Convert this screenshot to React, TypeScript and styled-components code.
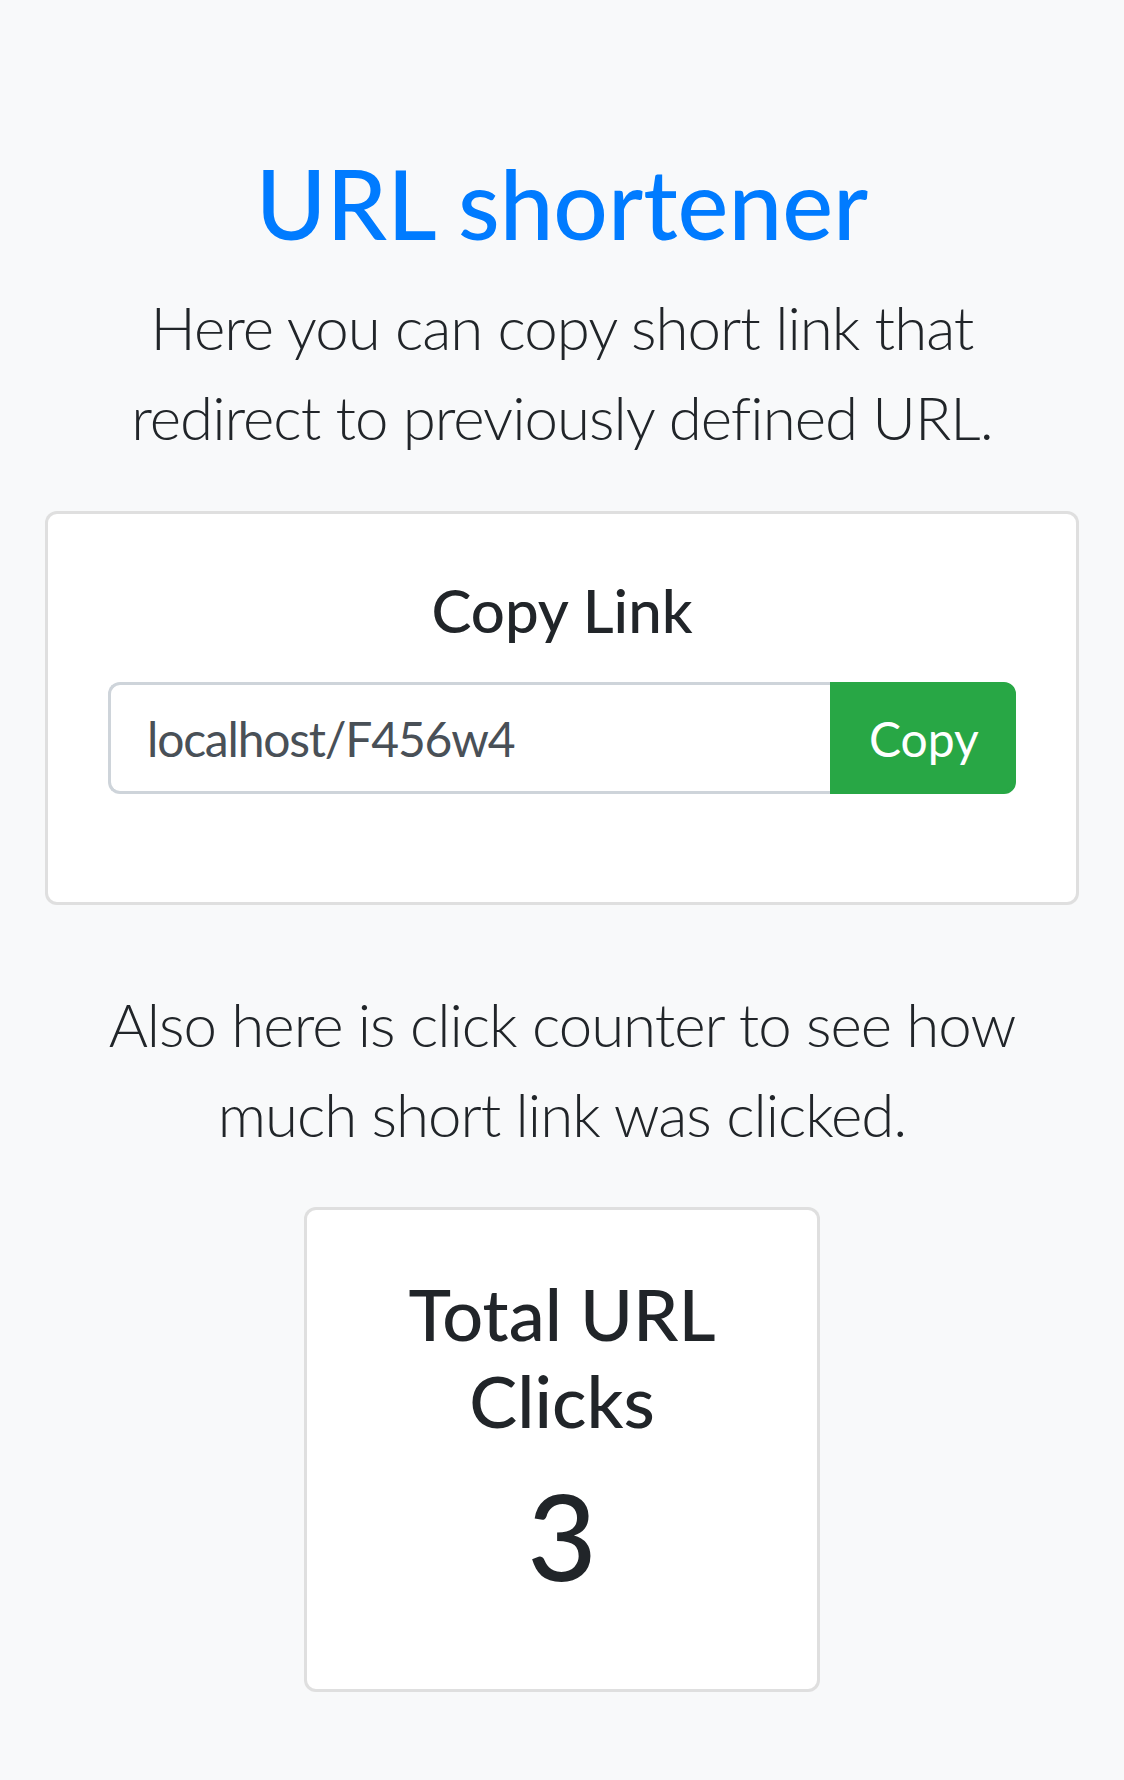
import React from "react";
import styled, { createGlobalStyle } from "styled-components";

const GlobalStyle = createGlobalStyle`
  html, body {
    margin: 0;
    padding: 0;
    background: #f8f9fa;
  }
  body {
    font-family: Lato, "Open Sans", "Noto Sans", sans-serif;
    color: #212529;
    -webkit-font-smoothing: antialiased;
  }
  * { box-sizing: border-box; }
`;

const Page = styled.main`
  min-height: 1780px;
  padding: 145px 45px 90px;
  display: flex;
  flex-direction: column;
  align-items: center;
  text-align: center;
`;

const Title = styled.h2`
  margin: 0;
  font-size: 96px;
  line-height: 1.2;
  font-weight: 500;
  color: #007bff;
`;

const Lead = styled.p<{ $top: number }>`
  margin: ${(p) => p.$top}px 0 0;
  padding: 0 15px;
  font-size: 60px;
  line-height: 90px;
  font-weight: 300;
  letter-spacing: -1px;
  color: #212529;
`;

const Card = styled.section<{ $width?: number; $top: number }>`
  margin-top: ${(p) => p.$top}px;
  width: ${(p) => (p.$width ? `${p.$width}px` : "100%")};
  background: #fff;
  border: 3px solid rgba(0, 0, 0, 0.125);
  border-radius: 12px;
  padding: 60px;
  display: flex;
  flex-direction: column;
  align-items: stretch;
`;

const CardTitle = styled.h5`
  margin: 0 0 36px;
  font-size: 60px;
  line-height: 1.2;
  font-weight: 500;
`;

const InputGroup = styled.div`
  display: flex;
  align-items: stretch;
  height: 112px;
  margin-bottom: 48px;
`;

const UrlInput = styled.input`
  flex: 1 1 auto;
  min-width: 0;
  height: 100%;
  padding: 0 36px;
  font-family: inherit;
  font-size: 48px;
  letter-spacing: -1.2px;
  color: #495057;
  background: #fff;
  border: 3px solid #ced4da;
  border-right: none;
  border-radius: 12px 0 0 12px;
  outline: none;
`;

const CopyButton = styled.button`
  flex: 0 0 auto;
  width: 186px;
  height: 100%;
  padding: 0 36px;
  font-family: inherit;
  font-size: 48px;
  color: #fff;
  background: #28a745;
  border: 3px solid #28a745;
  border-radius: 0 12px 12px 0;
  cursor: pointer;
`;

const StatTitle = styled.h4`
  margin: 0 0 20px;
  font-size: 72px;
  line-height: 1.2;
  font-weight: 500;
`;

const StatValue = styled.h1`
  margin: 0 0 22px;
  font-size: 120px;
  line-height: 144px;
  font-weight: 500;
`;

export default function App() {
  return (
    <>
      <GlobalStyle />
      <Page>
        <Title>URL shortener</Title>
        <Lead $top={22}>
          Here you can copy short link that redirect to previously defined URL.
        </Lead>
        <Card $top={49}>
          <CardTitle>Copy Link</CardTitle>
          <InputGroup>
            <UrlInput readOnly value="localhost/F456w4" />
            <CopyButton type="button">Copy</CopyButton>
          </InputGroup>
        </Card>
        <Lead $top={74}>
          Also here is click counter to see how much short link was clicked.
        </Lead>
        <Card $top={48} $width={516}>
          <StatTitle>Total URL Clicks</StatTitle>
          <StatValue>3</StatValue>
        </Card>
      </Page>
    </>
  );
}
